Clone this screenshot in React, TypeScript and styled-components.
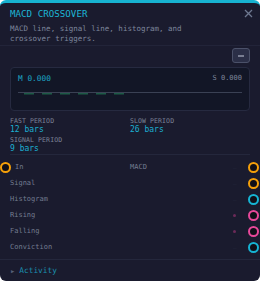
import React from "react";
import styled, { createGlobalStyle } from "styled-components";

const Global = createGlobalStyle`
  html, body { margin: 0; padding: 0; background: #ffffff; }
  * { box-sizing: border-box; }
`;

const mono = `"DejaVu Sans Mono", "Liberation Mono", monospace`;

const Card = styled.div`
  position: relative;
  width: 260px;
  height: 281px;
  background: #1a1b2e;
  border-top: 3px solid #17b3d1;
  border-radius: 6px;
  font-family: ${mono};
  display: flex;
  flex-direction: column;
`;

const Header = styled.div`
  padding: 3px 10px 0 10px;
  height: 43px;
  border-bottom: 1px solid #222439;
`;

const TitleRow = styled.div`
  display: flex;
  justify-content: space-between;
  align-items: center;
  height: 14px;
`;

const Title = styled.div`
  color: #1cb5d4;
  font-size: 9.2px;
`;

const Close = styled.button`
  background: none;
  border: none;
  padding: 0;
  margin-right: -3px;
  width: 10px;
  height: 10px;
  display: flex;
  align-items: center;
  justify-content: center;
`;

const Desc = styled.div`
  color: #7d869c;
  font-size: 7.5px;
  line-height: 10px;
  margin-top: 4px;
`;

const Toolbar = styled.div`
  display: flex;
  justify-content: flex-end;
  padding: 2px 10px 0 10px;
`;

const MiniButton = styled.button`
  width: 18px;
  height: 15px;
  background: #2b2f47;
  border: 1px solid #4b5169;
  border-radius: 3px;
  padding: 0;
  display: flex;
  align-items: center;
  justify-content: center;
`;

const Chart = styled.div`
  margin: 4px 10px 0 10px;
  height: 44px;
  background: #121626;
  border: 1px solid #262a40;
  border-radius: 4px;
  padding: 5px 7px 0 7px;
`;

const ChartTop = styled.div`
  display: flex;
  justify-content: space-between;
  align-items: center;
  height: 10px;
`;

const ChartValue = styled.span<{ $accent?: boolean }>`
  font-size: ${(p) => (p.$accent ? "7.8px" : "7px")};
  color: ${(p) => (p.$accent ? "#1ca6c6" : "#7d8599")};
`;

const ChartSvg = styled.svg`
  display: block;
  margin-top: 9px;
`;

const Params = styled.div`
  display: grid;
  grid-template-columns: 120px 1fr;
  padding-top: 6px;
  height: 44px;
  border-bottom: 1px solid #24273c;
  margin: 0 10px;
`;

const Param = styled.div`
  display: flex;
  flex-direction: column;
`;

const ParamLabel = styled.div`
  font-size: 6.5px;
  line-height: 8px;
  color: #7a8296;
  letter-spacing: 0.1px;
`;

const ParamValue = styled.div`
  font-size: 8px;
  line-height: 9px;
  color: #1cb0d2;
`;

const Rows = styled.div`
  padding: 4px 0 4px 0;
  border-bottom: 1px solid #24273c;
`;

const Row = styled.div`
  position: relative;
  display: grid;
  grid-template-columns: 120px 1fr 30px;
  align-items: center;
  height: 16px;
  padding: 0 0 0 10px;
`;

const RowLabel = styled.span<{ $inset?: boolean }>`
  font-size: 7px;
  color: #737b90;
  padding-left: ${(p) => (p.$inset ? "5px" : "0")};
`;

const OutLabel = styled.span`
  font-size: 7px;
  color: #737b90;
`;

const Value = styled.span`
  display: flex;
  align-items: center;
  font-size: 6px;
  color: #23263a;
  padding-left: 3px;
`;

const Dot = styled.span<{ $color: string }>`
  width: 3px;
  height: 3px;
  border-radius: 50%;
  background: ${(p) => p.$color};
`;

const Port = styled.span<{ $color: string; $side: "left" | "right" }>`
  position: absolute;
  top: 2.5px;
  ${(p) => (p.$side === "left" ? "left: 0px;" : "right: 1px;")}
  width: 11px;
  height: 11px;
  border-radius: 50%;
  border: 2px solid ${(p) => p.$color};
  background: #0f0f18;
`;

const Footer = styled.div`
  display: flex;
  align-items: center;
  gap: 5px;
  padding: 0 10px;
  height: 21px;
`;

const Caret = styled.span`
  font-size: 5.5px;
  color: #566078;
  margin-left: 1px;
`;

const FooterLabel = styled.span`
  font-size: 7.8px;
  color: #1a8fae;
`;

const ORANGE = "#f5a00a";
const CYAN = "#16b4d4";
const PINK = "#e8489a";

type Out = { label: string; color: string; dot?: boolean };

const outputs: Out[] = [
  { label: "Signal", color: ORANGE },
  { label: "Histogram", color: CYAN },
  { label: "Rising", color: PINK, dot: true },
  { label: "Falling", color: PINK, dot: true },
  { label: "Conviction", color: CYAN },
];

export default function App() {
  const bars = [0, 1, 2, 3, 4, 5];
  return (
    <>
      <Global />
      <Card>
        <Header>
          <TitleRow>
            <Title>MACD CROSSOVER</Title>
            <Close aria-label="close">
              <svg width="9" height="9" viewBox="0 0 9 9">
                <path d="M1 1L8 8M8 1L1 8" stroke="#6e7890" strokeWidth="1.3" />
              </svg>
            </Close>
          </TitleRow>
          <Desc>
            MACD line, signal line, histogram, and
            <br />
            crossover triggers.
          </Desc>
        </Header>
        <Toolbar>
          <MiniButton aria-label="collapse">
            <svg width="6" height="2" viewBox="0 0 6 2">
              <rect x="0" y="0.5" width="6" height="1" fill="#c8cede" />
            </svg>
          </MiniButton>
        </Toolbar>
        <Chart>
          <ChartTop>
            <ChartValue $accent>M 0.000</ChartValue>
            <ChartValue>S 0.000</ChartValue>
          </ChartTop>
          <ChartSvg width="224" height="6" viewBox="0 0 224 6">
            <rect x="0" y="0" width="224" height="1" fill="#3a4154" />
            {bars.map((i) => (
              <rect key={i} x={6 + i * 18} y="1" width="10" height="1.5" fill="#1d5a46" />
            ))}
          </ChartSvg>
        </Chart>
        <Params>
          <Param>
            <ParamLabel>FAST PERIOD</ParamLabel>
            <ParamValue>12 bars</ParamValue>
          </Param>
          <Param>
            <ParamLabel>SLOW PERIOD</ParamLabel>
            <ParamValue>26 bars</ParamValue>
          </Param>
          <Param>
            <ParamLabel>SIGNAL PERIOD</ParamLabel>
            <ParamValue>9 bars</ParamValue>
          </Param>
        </Params>
        <Rows>
          <Row>
            <Port $side="left" $color={ORANGE} />
            <RowLabel $inset>In</RowLabel>
            <OutLabel>MACD</OutLabel>
            <Value>–</Value>
            <Port $side="right" $color={ORANGE} />
          </Row>
          {outputs.map((o) => (
            <Row key={o.label}>
              <RowLabel>{o.label}</RowLabel>
              <span />
              <Value>{o.dot ? <Dot $color="#6b2a58" /> : "–"}</Value>
              <Port $side="right" $color={o.color} />
            </Row>
          ))}
        </Rows>
        <Footer>
          <Caret>▶</Caret>
          <FooterLabel>Activity</FooterLabel>
        </Footer>
      </Card>
    </>
  );
}
